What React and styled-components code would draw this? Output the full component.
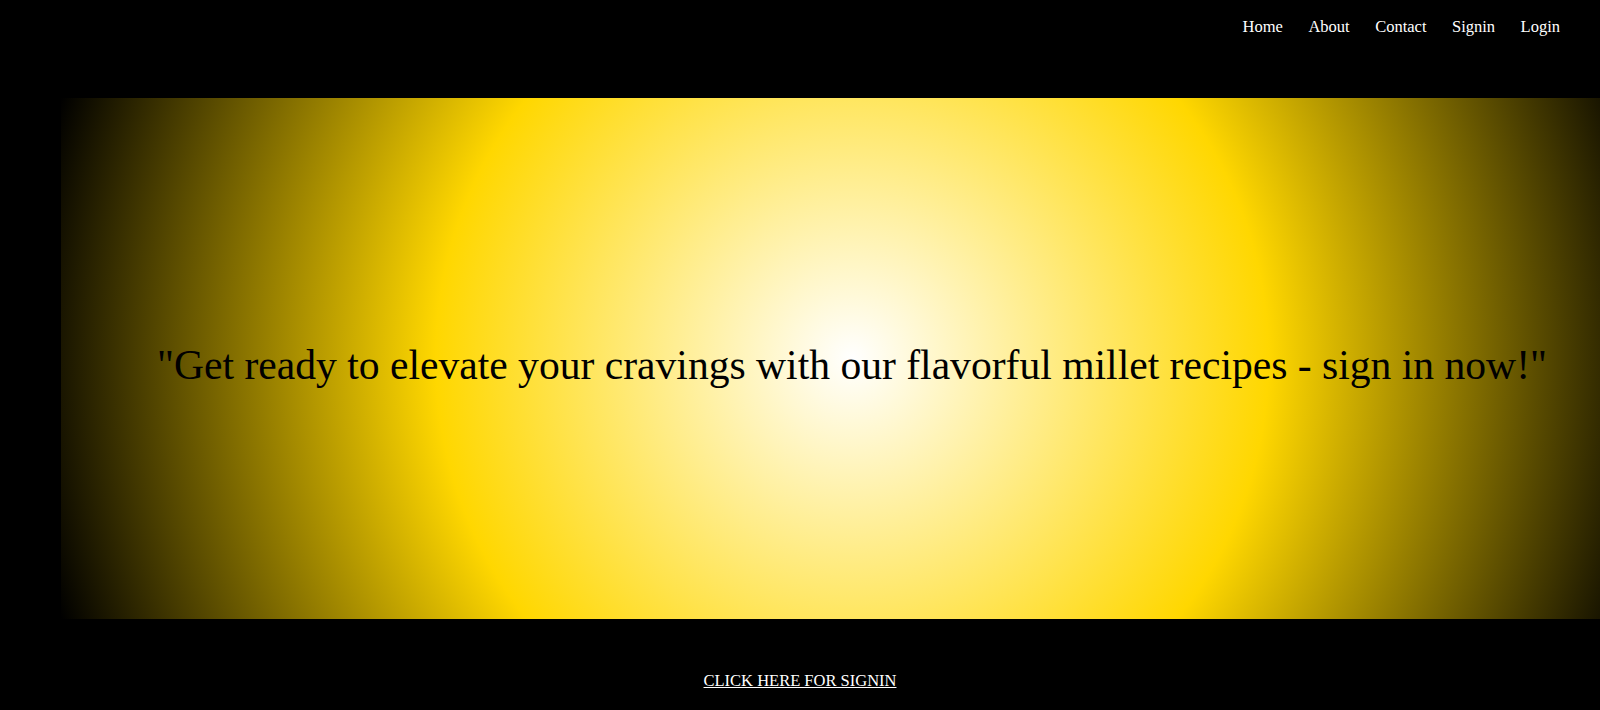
import React from 'react';
import styled, { createGlobalStyle } from 'styled-components';

const GlobalStyle = createGlobalStyle`
    body {
        margin: 0;
        background-color: black;
        font-family: "Liberation Serif", "Times New Roman", serif;
        overflow-x: hidden;
    }
`

const Page = styled.div`
    width: 100%;
    min-height: 710px;
    background-color: black;
`
const Navbar = styled.nav`
    display: flex;
    justify-content: flex-end;
    align-items: flex-start;
    gap: 25.5px;
    padding: 17px 40px 0 0;
    height: 80px;
    box-sizing: border-box;
`
const NavLink = styled.a`
    color: white;
    font-size: 16.5px;
    text-decoration: none;
    cursor: pointer;
`
const Banner = styled.section`
    width: 1582px;
    height: 521px;
    margin-top: 18px;
    margin-left: 61px;
    display: flex;
    align-items: center;
    justify-content: center;
    background: radial-gradient(circle, white, gold, black);
`
const Quote = styled.h2`
    margin: 0;
    font-size: 41.6px;
    font-weight: normal;
    color: black;
    text-align: center;
    padding-top: 12px;
`
const Footer = styled.div`
    display: flex;
    justify-content: center;
    padding-top: 52px;
`
const SigninLink = styled.a`
    color: white;
    font-size: 16.5px;
    text-decoration: underline;
    cursor: pointer;
`

const App = () => {
  return (
    <Page>
        <GlobalStyle />
        <Navbar>
            <NavLink>Home</NavLink>
            <NavLink>About</NavLink>
            <NavLink>Contact</NavLink>
            <NavLink>Signin</NavLink>
            <NavLink>Login</NavLink>
        </Navbar>
        <Banner>
            <Quote>"Get ready to elevate your cravings with our flavorful millet recipes - sign in now!"</Quote>
        </Banner>
        <Footer>
            <SigninLink>CLICK HERE FOR SIGNIN</SigninLink>
        </Footer>
    </Page>
  )
}

export default App
